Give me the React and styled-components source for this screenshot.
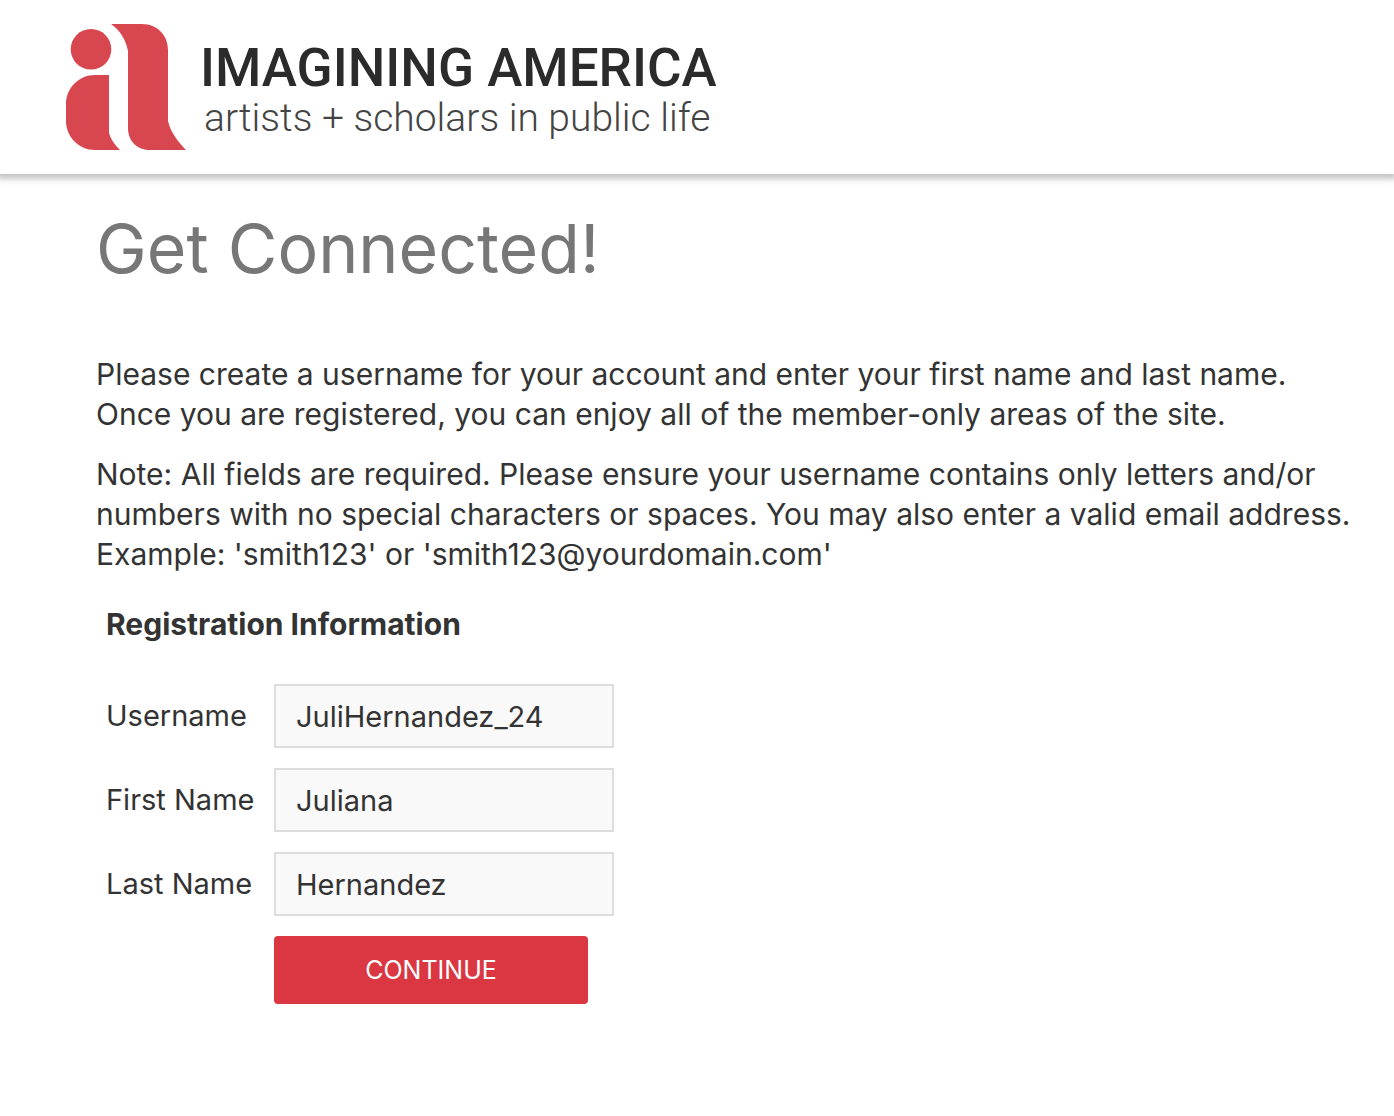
import React from "react";
import styled, { createGlobalStyle } from "styled-components";

const GlobalStyle = createGlobalStyle`
  *, *::before, *::after { box-sizing: border-box; }
  body {
    margin: 0;
    background: #fff;
    color: #333;
    font-family: Inter, "Liberation Sans", sans-serif;
    font-size: 30px;
    line-height: 40px;
  }
`;

const Header = styled.header`
  display: flex;
  padding: 24px 66px;
  background: #fff;
  box-shadow: 0 2px 6px 3px rgba(0, 0, 0, 0.23);
`;

const Brand = styled.a`
  display: flex;
  align-items: flex-start;
  gap: 14px;
  color: #2b2b2b;
  font-family: Roboto, "Liberation Sans", sans-serif;
  text-decoration: none;
  white-space: nowrap;
`;

const Mark = styled.svg`
  display: block;
  width: 120px;
  height: 126px;
  fill: #d8464f;
`;

const Wordmark = styled.span`
  display: flex;
  flex-direction: column;
  padding-top: 16px;
`;

const BrandName = styled.span`
  font-size: 53px;
  font-weight: 500;
  line-height: 56px;
`;

const Tagline = styled.span`
  padding-left: 4px;
  color: #444;
  font-size: 39px;
  font-weight: 300;
  line-height: 44px;
`;

const Content = styled.main`
  padding: 34px 40px 96px 96px;
`;

const Title = styled.h1`
  margin: 0 0 66px;
  color: #777;
  font-size: 68px;
  font-weight: 400;
  line-height: 80px;
`;

const Paragraph = styled.p`
  margin: 0 0 20px;
`;

const Form = styled.form`
  padding: 10px;
`;

const SectionTitle = styled.h2`
  margin: 0 0 40px;
  font-size: 30px;
  font-weight: 700;
  line-height: 40px;
`;

const Fields = styled.div`
  display: grid;
  grid-template-columns: 148px minmax(0, 340px);
  align-items: center;
  gap: 20px;
  font-size: 29px;
`;

const Label = styled.label`
  white-space: nowrap;
`;

const Input = styled.input`
  width: 100%;
  height: 64px;
  padding: 0 20px;
  border: 2px solid #ddd;
  border-radius: 0;
  background: #f9f9f9;
  color: #333;
  font: inherit;
  outline: none;
`;

const Submit = styled.button`
  grid-column: 2;
  justify-self: start;
  width: 314px;
  height: 68px;
  padding: 0;
  border: 0;
  border-radius: 4px;
  background: #da3743;
  color: #fff;
  font: inherit;
  font-size: 25px;
  text-transform: uppercase;
  cursor: pointer;
`;

const fields = [
  { id: "username", label: "Username", value: "JuliHernandez_24" },
  { id: "firstName", label: "First Name", value: "Juliana" },
  { id: "lastName", label: "Last Name", value: "Hernandez" },
];

export default function App() {
  return (
    <>
      <GlobalStyle />
      <Header>
        <Brand href="#">
          <Mark viewBox="0 0 120 126" aria-hidden="true">
            <circle cx="25" cy="25.3" r="20.3" />
            <path d="M43 51V109C45 116 49 121 54 126H29C13 126 0 113 0 97V80C0 64 13 51 29 51Z" />
            <path d="M45 0H76C91 0 102 11 102 26V97C104 107 112 118 120 126H84C71 126 62 117 62 104V27C60 16 54 6 45 0Z" />
          </Mark>
          <Wordmark>
            <BrandName>IMAGINING AMERICA</BrandName>
            <Tagline>artists + scholars in public life</Tagline>
          </Wordmark>
        </Brand>
      </Header>
      <Content>
        <Title>Get Connected!</Title>
        <Paragraph>
          Please create a username for your account and enter your first name and last name.
          <br />
          Once you are registered, you can enjoy all of the member-only areas of the site.
        </Paragraph>
        <Paragraph>
          Note: All fields are required. Please ensure your username contains only letters and/or
          numbers with no special characters or spaces. You may also enter a valid email address.
          <br />
          Example: 'smith123' or 'smith123@yourdomain.com'
        </Paragraph>
        <Form onSubmit={(event) => event.preventDefault()}>
          <SectionTitle>Registration Information</SectionTitle>
          <Fields>
            {fields.map(({ id, label, value }) => (
              <React.Fragment key={id}>
                <Label htmlFor={id}>{label}</Label>
                <Input id={id} name={id} type="text" defaultValue={value} spellCheck={false} />
              </React.Fragment>
            ))}
            <Submit type="submit">Continue</Submit>
          </Fields>
        </Form>
      </Content>
    </>
  );
}
